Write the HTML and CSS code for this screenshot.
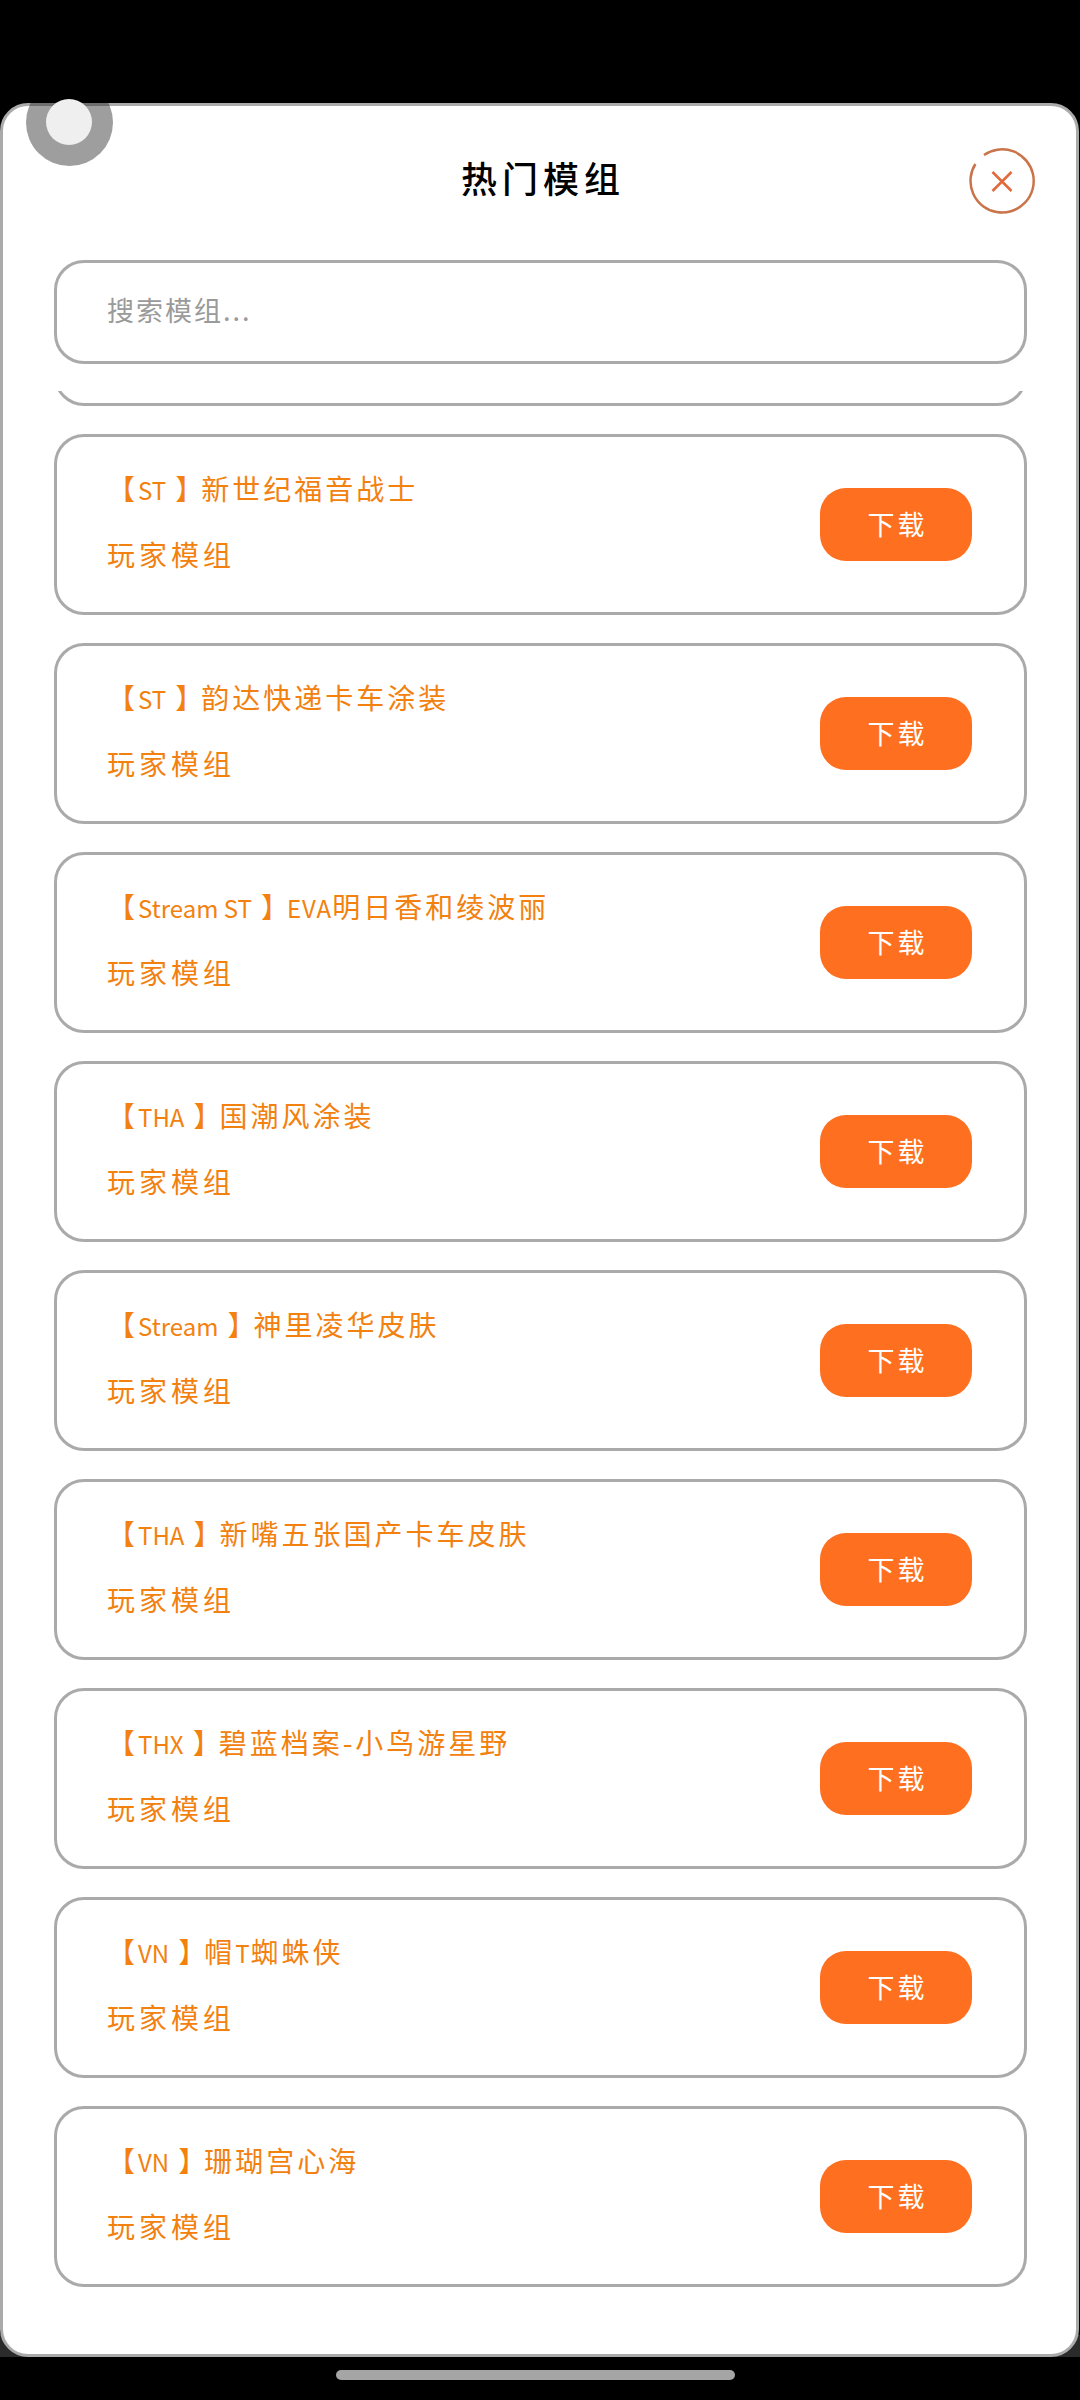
FILE: index.html
```html
<!DOCTYPE html>
<html>
<head>
<title>热门模组</title>
<link rel="stylesheet" href="styles.css">
</head>
<body>
<div class="touch-dot"></div>

<div class="modal">
  <header class="modal-head">
    <h1 class="modal-title">热门模组</h1>
    <button class="close-btn" type="button">
      <svg width="66" height="66" viewBox="0 0 66 66" fill="none">
        <path d="M15 7A31.6 31.6 0 1 1 6.4 16" stroke="#c9744a" stroke-width="2.5"/>
        <path d="M23.5 24L42.5 43M42.5 24L23.5 43" stroke="#e2693a" stroke-width="2.5"/>
      </svg>
    </button>
  </header>

  <input class="search" type="search" placeholder="搜索模组...">

  <div class="mod-list">
    <div class="mod-card mod-card-cut"></div>

    <div class="mod-card">
      <div class="mod-info">
        <p class="mod-name">【<span class="pack">ST</span><span class="br">】</span>新世纪福音战士</p>
        <p class="mod-tag">玩家模组</p>
      </div>
      <button class="dl-btn" type="button">下载</button>
    </div>

    <div class="mod-card">
      <div class="mod-info">
        <p class="mod-name">【<span class="pack">ST</span><span class="br">】</span>韵达快递卡车涂装</p>
        <p class="mod-tag">玩家模组</p>
      </div>
      <button class="dl-btn" type="button">下载</button>
    </div>

    <div class="mod-card">
      <div class="mod-info">
        <p class="mod-name">【<span class="pack">Stream ST</span><span class="br">】</span><span class="lat">EVA</span>明日香和绫波丽</p>
        <p class="mod-tag">玩家模组</p>
      </div>
      <button class="dl-btn" type="button">下载</button>
    </div>

    <div class="mod-card">
      <div class="mod-info">
        <p class="mod-name">【<span class="pack">THA</span><span class="br">】</span>国潮风涂装</p>
        <p class="mod-tag">玩家模组</p>
      </div>
      <button class="dl-btn" type="button">下载</button>
    </div>

    <div class="mod-card">
      <div class="mod-info">
        <p class="mod-name">【<span class="pack">Stream</span><span class="br">】</span>神里凌华皮肤</p>
        <p class="mod-tag">玩家模组</p>
      </div>
      <button class="dl-btn" type="button">下载</button>
    </div>

    <div class="mod-card">
      <div class="mod-info">
        <p class="mod-name">【<span class="pack">THA</span><span class="br">】</span>新嘴五张国产卡车皮肤</p>
        <p class="mod-tag">玩家模组</p>
      </div>
      <button class="dl-btn" type="button">下载</button>
    </div>

    <div class="mod-card">
      <div class="mod-info">
        <p class="mod-name">【<span class="pack">THX</span><span class="br">】</span>碧蓝档案-小鸟游星野</p>
        <p class="mod-tag">玩家模组</p>
      </div>
      <button class="dl-btn" type="button">下载</button>
    </div>

    <div class="mod-card">
      <div class="mod-info">
        <p class="mod-name">【<span class="pack">VN</span><span class="br">】</span>帽<span class="lat">T</span>蜘蛛侠</p>
        <p class="mod-tag">玩家模组</p>
      </div>
      <button class="dl-btn" type="button">下载</button>
    </div>

    <div class="mod-card">
      <div class="mod-info">
        <p class="mod-name">【<span class="pack">VN</span><span class="br">】</span>珊瑚宫心海</p>
        <p class="mod-tag">玩家模组</p>
      </div>
      <button class="dl-btn" type="button">下载</button>
    </div>
  </div>
</div>

<div class="home-bar"></div>
</body>
</html>
```

FILE: styles.css
```css
html, body {
  margin: 0;
  height: 2400px;
  overflow: hidden;
  font-family: "Noto Sans CJK SC", "Noto Sans", sans-serif;
}

/* the grey band only shows behind the modal's bottom corners */
body {
  background: linear-gradient(black 2335px, #2b2b2b 2335px, #2b2b2b 2357px, black 2357px);
}

.touch-dot {
  position: absolute;
  left: 26px;
  top: 79px;
  z-index: 2;
  width: 87px;
  height: 87px;
}

.touch-dot::before {
  content: "";
  position: absolute;
  inset: 0;
  border-radius: 50%;
  background: linear-gradient(#6e6e6e 27px, #9e9e9e 27px);
  clip-path: inset(24px 0 0 0);
}

.touch-dot::after {
  content: "";
  position: absolute;
  left: 20px;
  top: 20px;
  width: 46px;
  height: 46px;
  border-radius: 50%;
  background-color: #efefef;
}

.modal {
  box-sizing: border-box;
  width: 1079px;
  height: 2254px;
  margin-top: 103px;
  padding: 0 49px 0 51px;
  background-color: white;
  border: 3px solid #aaaaaa;
  border-radius: 28px;
  overflow: hidden;
}

.modal-head {
  display: grid;
  grid-template-columns: 1fr auto 1fr;
  align-items: start;
  height: 154px;
  padding-top: 42px;
  box-sizing: border-box;
}

.modal-title {
  grid-column: 2;
  margin: 0;
  padding-left: 5px;
  font-size: 36px;
  font-weight: 500;
  line-height: 58px;
  letter-spacing: 5px;
  color: black;
}

.close-btn {
  grid-column: 3;
  justify-self: end;
  width: 66px;
  height: 66px;
  margin-right: -8px;
  padding: 0;
  border: none;
  background: none;
}

.close-btn svg {
  display: block;
}

.search {
  display: block;
  box-sizing: border-box;
  width: 100%;
  height: 104px;
  padding: 0 50px 5px;
  border: 3px solid #aaaaaa;
  border-radius: 30px;
  outline: none;
  font-family: inherit;
  font-size: 27px;
  letter-spacing: 2px;
  color: #555;
  background-color: white;
}

.search::placeholder {
  color: #9a9a9a;
}

.mod-list {
  display: flex;
  flex-direction: column;
  gap: 28px;
  margin-top: 27px;
  height: 1980px;
  overflow: hidden;
}

.mod-card {
  display: flex;
  flex: none;
  align-items: center;
  justify-content: space-between;
  box-sizing: border-box;
  height: 181px;
  padding: 0 52px 0 50px;
  border: 3px solid #aaaaaa;
  border-radius: 30px;
}

/* card scrolled almost out of the list */
.mod-card-cut {
  margin-top: -166px;
}

.mod-info {
  padding-bottom: 8px;
}

.mod-name, .mod-tag {
  margin: 0;
  font-size: 28px;
  line-height: 40px;
  letter-spacing: 3px;
  color: #f2810f;
}

.mod-tag {
  margin-top: 24px;
  letter-spacing: 4px;
}

/* latin in the names is set tighter than the chinese */
.pack {
  margin-right: 9px;
  font-size: 24px;
  letter-spacing: 0;
}

.br {
  letter-spacing: -2px;
}

.lat {
  font-size: 24px;
  letter-spacing: 1px;
}

.dl-btn {
  width: 152px;
  height: 73px;
  padding: 0 0 3px 3px;
  border: none;
  border-radius: 26px;
  background-color: #ff6f20;
  font-family: inherit;
  font-size: 27px;
  letter-spacing: 3px;
  color: white;
}

.home-bar {
  width: 399px;
  height: 10px;
  margin: 13px 0 0 336px;
  border-radius: 5px;
  background-color: #a5a5a5;
}
```
